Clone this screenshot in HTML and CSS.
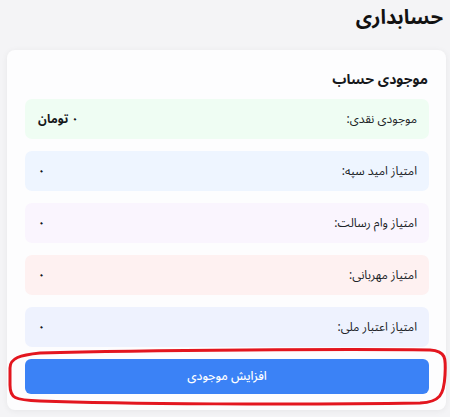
FILE: index.html
```html
<!DOCTYPE html>
<html lang="fa" dir="rtl">
<head>
<meta charset="utf-8">
<title>حسابداری</title>
<link rel="stylesheet" href="styles.css">
</head>
<body>
<div class="page">
  <h1 class="title">حسابداری</h1>
  <section class="card">
    <h2 class="card-title">موجودی حساب</h2>
    <div class="rows">
      <div class="row row-green"><span class="label">موجودی نقدی:</span><span class="value">۰ تومان</span></div>
      <div class="row row-blue"><span class="label">امتیاز امید سپه:</span><span class="value">۰</span></div>
      <div class="row row-purple"><span class="label">امتیاز وام رسالت:</span><span class="value">۰</span></div>
      <div class="row row-red"><span class="label">امتیاز مهربانی:</span><span class="value">۰</span></div>
      <div class="row row-indigo"><span class="label">امتیاز اعتبار ملی:</span><span class="value">۰</span></div>
    </div>
    <button class="btn" type="button">افزایش موجودی</button>
  </section>
  <svg class="annotation" width="450" height="417" viewBox="0 0 450 417" aria-hidden="true">
    <path d="M 40 353 C 150 350, 350 349, 430 350 C 446 351, 446 358, 445 375 C 444 395, 440 402, 420 403 C 300 405, 120 404, 40 401 C 14 400, 10 398, 10 385 L 10 368 C 10 358, 20 355, 40 353 Z" fill="none" stroke="#e3161f" stroke-width="3"/>
  </svg>
</div>
</body>
</html>
```

FILE: styles.css
```css
* { box-sizing: border-box; }
html, body {
  margin: 0;
  padding: 0;
  background: #f4f4f6;
}
body {
  font-family: "Noto Sans Arabic", "Noto Sans", "DejaVu Sans", sans-serif;
  color: #1f2328;
}
.page {
  position: relative;
  width: 450px;
  height: 417px;
  padding: 0 4px 0 7px;
}
.title {
  margin: 0 -4px 16px 0;
  padding: 2px 7px 0 0;
  line-height: 32px;
  font-size: 20px;
  font-weight: 700;
  color: #111;
}
.card {
  background: #fdfdfe;
  border-radius: 8px;
  box-shadow: 0 1px 6px rgba(0,0,0,0.06);
  padding: 16px 17px 16px 18px;
  display: flex;
  flex-direction: column;
}
.card-title {
  margin: 0 0 5px 0;
  line-height: 28px;
  font-size: 14px;
  font-weight: 700;
  color: #16181b;
  padding-right: 1px;
}
.rows {
  display: flex;
  flex-direction: column;
  gap: 12px;
}
.row {
  height: 40px;
  border-radius: 7px;
  display: flex;
  align-items: center;
  justify-content: space-between;
  padding: 0 12px 0 13px;
  font-size: 12px;
}
.row-green { background: #effdf3; }
.row-blue { background: #eef5ff; }
.row-purple { background: #faf5fe; }
.row-red { background: #fef1f1; }
.row-indigo { background: #eef2fe; }
.label { color: #202327; }
.value { font-weight: 700; color: #15171a; }
.btn {
  margin-top: 12px;
  height: 35px;
  border: none;
  border-radius: 6px;
  background: #3b82f6;
  color: #fff;
  font-family: inherit;
  font-size: 12px;
  font-weight: 500;
}
.annotation {
  position: absolute;
  top: 0;
  left: 0;
  pointer-events: none;
}
```
